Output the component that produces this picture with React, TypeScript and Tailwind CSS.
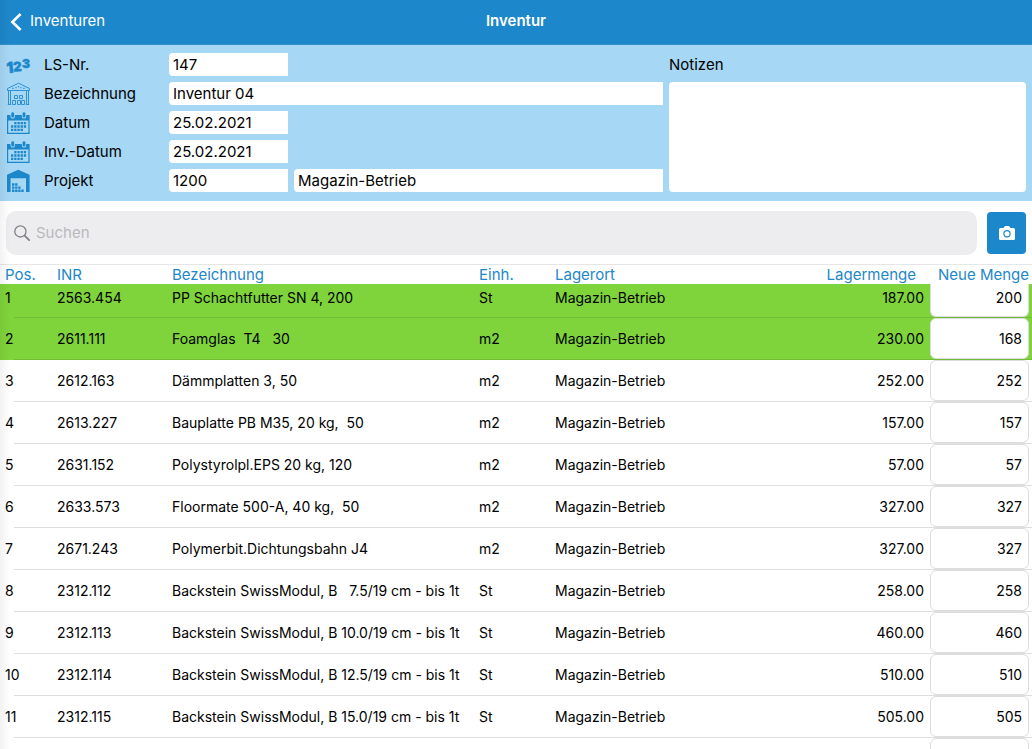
import React, { useState } from "react";

type Item = {
  pos: string;
  inr: string;
  name: string;
  unit: string;
  place: string;
  stock: string;
  count: string;
  changed?: boolean;
};

const PLACE = "Magazin-Betrieb";

const items: Item[] = [
  { pos: "1", inr: "2563.454", name: "PP Schachtfutter SN 4, 200", unit: "St", place: PLACE, stock: "187.00", count: "200", changed: true },
  { pos: "2", inr: "2611.111", name: "Foamglas  T4   30", unit: "m2", place: PLACE, stock: "230.00", count: "168", changed: true },
  { pos: "3", inr: "2612.163", name: "Dämmplatten 3, 50", unit: "m2", place: PLACE, stock: "252.00", count: "252" },
  { pos: "4", inr: "2613.227", name: "Bauplatte PB M35, 20 kg,  50", unit: "m2", place: PLACE, stock: "157.00", count: "157" },
  { pos: "5", inr: "2631.152", name: "Polystyrolpl.EPS 20 kg, 120", unit: "m2", place: PLACE, stock: "57.00", count: "57" },
  { pos: "6", inr: "2633.573", name: "Floormate 500-A, 40 kg,  50", unit: "m2", place: PLACE, stock: "327.00", count: "327" },
  { pos: "7", inr: "2671.243", name: "Polymerbit.Dichtungsbahn J4", unit: "m2", place: PLACE, stock: "327.00", count: "327" },
  { pos: "8", inr: "2312.112", name: "Backstein SwissModul, B   7.5/19 cm - bis 1t", unit: "St", place: PLACE, stock: "258.00", count: "258" },
  { pos: "9", inr: "2312.113", name: "Backstein SwissModul, B 10.0/19 cm - bis 1t", unit: "St", place: PLACE, stock: "460.00", count: "460" },
  { pos: "10", inr: "2312.114", name: "Backstein SwissModul, B 12.5/19 cm - bis 1t", unit: "St", place: PLACE, stock: "510.00", count: "510" },
  { pos: "11", inr: "2312.115", name: "Backstein SwissModul, B 15.0/19 cm - bis 1t", unit: "St", place: PLACE, stock: "505.00", count: "505" },
  { pos: "", inr: "", name: "", unit: "", place: "", stock: "", count: "" },
];

function NumbersIcon() {
  return (
    <svg viewBox="0 0 24 24" className="size-6 overflow-visible text-[#1d87cb]" fill="currentColor" stroke="currentColor" strokeWidth="0.5" strokeLinejoin="round" fontFamily="Inter, sans-serif" fontWeight="900" aria-hidden="true">
      <text x="0.4" y="20" fontSize="15" transform="rotate(-5 4 14)">1</text>
      <text x="7.2" y="18.2" fontSize="13" transform="rotate(-4 11 13)">2</text>
      <text x="16" y="14.8" fontSize="12">3</text>
    </svg>
  );
}

function WarehouseOutlineIcon() {
  return (
    <svg viewBox="0 0 24 24" className="size-6 text-[#2f92d4]" fill="none" stroke="currentColor" strokeWidth="1" strokeLinejoin="round" aria-hidden="true">
      <path d="M1.5 6.5 12.5 1.2l11 5.3v2h-22zM2.5 8.5v14M4.5 8.5v14M20.5 8.5v14M22.5 8.5v14M1.8 22.5h3.4M19.8 22.5h3.4" />
      <path d="M8.5 13.5h3v3h-3zM13.5 13.5h3v3h-3zM6.5 18.5h3v4h-3zM11.5 18.5h3v4h-3zM15.5 18.5h3v4h-3z" />
      <path d="M6.2 6.4h1.4M9.4 5.6h1.2M11.9 4.6h1.2M14.2 5.6h1.2M17.2 6.4h1.4" strokeWidth="1.2" />
    </svg>
  );
}

function CalendarIcon() {
  return (
    <svg viewBox="0 0 24 24" className="size-6 text-[#1d87cb]" aria-hidden="true">
      <path fill="currentColor" fillRule="evenodd" d="M1 4h22.6v19H1zM2.2 9.4v12.4h20.2V9.4z" />
      <path d="M6.7 3v2.4M18 3v2.4" stroke="#a6d7f5" strokeWidth="4.4" strokeLinecap="round" />
      <path d="M6.7 2.6v2.6M18 2.6v2.6" stroke="currentColor" strokeWidth="2.8" strokeLinecap="round" />
      <path d="M8.2 12.2h12M5 15.5h15.2M5 18.8h12" stroke="currentColor" strokeWidth="2.3" strokeDasharray="2.3 0.9" />
    </svg>
  );
}

function WarehouseIcon() {
  return (
    <svg viewBox="0 0 24 24" className="size-6 text-[#1d87cb]" fill="currentColor" aria-hidden="true">
      <path d="M1 23V5.8L12.2.7l11.4 5.1V23H20V9.2H4.6V23z" />
      <path d="M6 14.3h2.4v2.4H6zM9.1 14.3h2.4v2.4H9.1zM6 17.4h2.4v2.4H6zM9.1 17.4h2.4v2.4H9.1zM12.2 17.4h2.4v2.4h-2.4zM6 20.5h2.4V23H6zM9.1 20.5h2.4V23H9.1zM12.2 20.5h2.4V23h-2.4zM15.3 20.5h2.4V23h-2.4z" />
    </svg>
  );
}

function CameraIcon() {
  return (
    <svg viewBox="0 0 16 14" className="h-3.5 w-4" aria-hidden="true">
      <path fill="white" d="M1.5 2H4.4L5.6.4Q5.9 0 6.4 0h3.2q.5 0 .8.4L11.6 2h2.9Q16 2 16 3.5v9q0 1.5-1.5 1.5h-13Q0 14 0 12.5v-9Q0 2 1.5 2z" />
      <circle cx="8" cy="7.8" r="3.1" fill="none" stroke="#1d87cb" strokeWidth="1.2" />
    </svg>
  );
}

const box = "h-[23px] min-w-0 rounded-l bg-white px-1 text-black outline-none";

function Field({ id, label, icon, children }: { id: string; label: string; icon: React.ReactNode; children: React.ReactNode }) {
  return (
    <div className="flex h-[23px] items-center">
      <span className="flex w-[38px] shrink-0">{icon}</span>
      <label htmlFor={id} className="w-[125px] shrink-0 pt-0.5">{label}</label>
      <div className="flex min-w-0 flex-1 gap-1.5">{children}</div>
    </div>
  );
}

function Row({ item, first }: { item: Item; first: boolean }) {
  const [count, setCount] = useState(item.count);
  const line = item.changed ? "border-[#72bd35]" : "border-[#dfdfdf]";
  const pad = first ? "pt-0 pb-[5px]" : "py-0";
  const cell = `border-b pl-[5px] whitespace-pre ${line} ${pad}`;
  return (
    <tr className={`${first ? "h-[34px]" : "h-[42px]"} ${item.changed ? "bg-[#7fd33b]" : "bg-white"}`}>
      <td className={`relative border-b border-transparent pl-[5px] after:absolute after:right-0 after:-bottom-px after:left-3.5 after:border-b ${item.changed ? "after:border-[#72bd35]" : "after:border-[#dfdfdf]"} ${pad}`}>{item.pos}</td>
      <td className={cell}>{item.inr}</td>
      <td className={cell}>{item.name}</td>
      <td className={cell}>{item.unit}</td>
      <td className={cell}>{item.place}</td>
      <td className={`${cell} pr-1.5 text-right`}>{item.stock}</td>
      <td className={`border-b py-0 pr-[3px] pl-0 ${line}`}>
        <input
          aria-label={`Neue Menge ${item.pos}`}
          value={count}
          onChange={(e) => setCount(e.target.value)}
          className={`block w-full border border-[#dcdcdc] bg-white pr-1.5 text-right outline-none ${first ? "h-[33px] rounded-b-md border-t-0 pb-1.5" : "h-[41px] rounded-md"}`}
        />
      </td>
    </tr>
  );
}

export default function App() {
  return (
    <div className="relative flex h-screen flex-col overflow-hidden bg-white font-[Inter,'Liberation_Sans',sans-serif] text-[15px] text-black">
      <header className="grid h-[45px] shrink-0 grid-cols-[1fr_auto_1fr] items-center border-b border-[#3a8fc4] bg-[#1d87cb] pb-px text-white">
        <a href="#inventuren" className="flex items-center gap-2 pl-2.5">
          <svg viewBox="0 0 12 18" className="h-[18px] w-3" fill="none" stroke="currentColor" strokeWidth="2.6" aria-hidden="true">
            <path d="M10.6 1 2.4 9l8.2 8" />
          </svg>
          Inventuren
        </a>
        <h1 className="font-semibold">Inventur</h1>
      </header>

      <section className="flex shrink-0 gap-1.5 bg-[#a6d7f5] pt-2 pr-1.5 pb-[9px] pl-1.5">
        <div className="flex min-w-0 flex-1 flex-col gap-1.5">
          <Field id="ls" label="LS-Nr." icon={<NumbersIcon />}>
            <input id="ls" defaultValue="147" className={`${box} w-[119px]`} />
          </Field>
          <Field id="bez" label="Bezeichnung" icon={<WarehouseOutlineIcon />}>
            <input id="bez" defaultValue="Inventur 04" className={`${box} flex-1`} />
          </Field>
          <Field id="datum" label="Datum" icon={<CalendarIcon />}>
            <input id="datum" defaultValue="25.02.2021" className={`${box} w-[119px]`} />
          </Field>
          <Field id="invdatum" label="Inv.-Datum" icon={<CalendarIcon />}>
            <input id="invdatum" defaultValue="25.02.2021" className={`${box} w-[119px]`} />
          </Field>
          <Field id="projekt" label="Projekt" icon={<WarehouseIcon />}>
            <input id="projekt" defaultValue="1200" className={`${box} w-[119px]`} />
            <input aria-label="Projektname" defaultValue="Magazin-Betrieb" className={`${box} flex-1`} />
          </Field>
        </div>
        <div className="flex w-[35%] max-w-[358px] flex-col gap-1.5">
          <label htmlFor="notizen" className="flex h-[23px] items-center pt-0.5">Notizen</label>
          <textarea id="notizen" className="flex-1 resize-none rounded bg-white p-1 outline-none" />
        </div>
      </section>

      <section className="flex h-16 shrink-0 items-center border-b border-[#e6e6e6] px-1.5">
        <label className="flex h-11 flex-1 items-center gap-1.5 rounded-[10px] bg-[#ededef] px-2">
          <svg viewBox="0 0 16 16" className="size-4" fill="none" stroke="#808084" strokeWidth="1.3" strokeLinecap="round" aria-hidden="true">
            <circle cx="6.4" cy="6.4" r="5.6" />
            <path d="m10.6 10.6 4.6 4.6" strokeWidth="1.7" />
          </svg>
          <input type="search" aria-label="Suchen" placeholder="Suchen" className="min-w-0 flex-1 bg-transparent pt-0.5 outline-none placeholder:text-[#b9b9bc]" />
        </label>
        <button type="button" aria-label="Kamera" className="ml-2.5 flex h-[42px] w-[39px] items-center justify-center rounded bg-[#1d87cb]">
          <CameraIcon />
        </button>
      </section>

      <table className="w-full shrink-0 table-fixed border-separate border-spacing-0 text-sm">
        <colgroup>
          <col className="w-[52px]" />
          <col className="w-[115px]" />
          <col className="w-[307px]" />
          <col className="w-[76px]" />
          <col />
          <col className="w-[130px]" />
          <col className="w-[102px]" />
        </colgroup>
        <thead>
          <tr className="h-[19px] text-left text-[15px] leading-[19px] whitespace-nowrap text-[#1d87cb] *:p-0 *:pl-[5px] *:font-normal">
            <th>Pos.</th>
            <th>INR</th>
            <th>Bezeichnung</th>
            <th>Einh.</th>
            <th>Lagerort</th>
            <th className="text-right"><span className="pr-3.5">Lagermenge</span></th>
            <th className="text-right"><span className="pr-[3px]">Neue Menge</span></th>
          </tr>
        </thead>
        <tbody>
          {items.map((item, i) => (
            <Row key={i} item={item} first={i === 0} />
          ))}
        </tbody>
      </table>

      <div className="pointer-events-none absolute inset-y-0 left-0 w-2.5 bg-linear-to-r from-black/5 to-transparent" />
    </div>
  );
}
